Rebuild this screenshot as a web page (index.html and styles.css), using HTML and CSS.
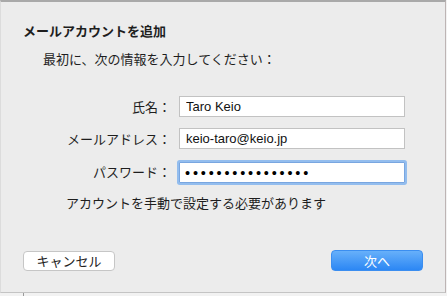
FILE: index.html
```html
<!DOCTYPE html>
<html lang="ja">
<head>
<meta charset="utf-8">
<link rel="stylesheet" href="styles.css">
</head>
<body>
<div class="dialog">
  <h1 class="title">メールアカウントを追加</h1>
  <p class="intro">最初に、次の情報を入力してください：</p>
  <div class="form">
    <label class="label" for="name">氏名：</label>
    <input class="field" id="name" type="text" value="Taro Keio">
    <label class="label" for="mail">メールアドレス：</label>
    <input class="field" id="mail" type="text" value="keio-taro@keio.jp">
    <label class="label" for="pass">パスワード：</label>
    <input class="field field-focus dots" id="pass" type="text" value="••••••••••••••••">
  </div>
  <p class="note">アカウントを手動で設定する必要があります</p>
  <div class="buttons">
    <button class="btn btn-cancel">キャンセル</button>
    <button class="btn btn-next">次へ</button>
  </div>
</div>
<div class="behind"></div>
</body>
</html>
```
FILE: styles.css
```css
html, body {
  margin: 0;
  padding: 0;
}
body {
  width: 447px;
  height: 296px;
  overflow: hidden;
  background: #f2f2f2;
  font-family: "Noto Sans CJK JP", "Liberation Sans", sans-serif;
  font-size: 13px;
  color: #1e1e1e;
}
.dialog {
  box-sizing: border-box;
  width: 446px;
  height: 293px;
  background: #ececec;
  border-top: 2px solid #a9a9a9;
  border-right: 1px solid #bdb4b4;
  border-bottom: 1px solid #c4c4c4;
  border-left: 1px solid #dcdcdc;
  padding: 21px 0 0 22px;
  display: flex;
  flex-direction: column;
}
.title {
  margin: 0;
  font-size: 13px;
  font-weight: bold;
  line-height: 16px;
  height: 16px;
}
.intro {
  margin: 12px 0 0 20px;
  line-height: 16px;
  height: 16px;
}
.form {
  margin-top: 29px;
  display: grid;
  grid-template-columns: 148px 226px;
  column-gap: 8px;
  row-gap: 11px;
  align-items: center;
}
.label {
  text-align: right;
  line-height: 16px;
}
.field {
  box-sizing: border-box;
  height: 21px;
  margin: 0;
  padding: 0 6px;
  border: 1px solid #c2c2c2;
  background: #fff;
  font-family: "Liberation Sans", sans-serif;
  font-size: 13px;
  color: #111;
  outline: none;
}
.field-focus {
  border-color: #79a6e0;
  box-shadow: 0 0 0 2px #93bdee;
  border-radius: 1px;
  margin-top: 2px;
}
.dots {
  font-size: 14.5px;
  letter-spacing: 2.8px;
  padding-left: 5px;
  color: #000;
}
.note {
  margin: 12px 0 0 43px;
  line-height: 16px;
  height: 16px;
}
.buttons {
  margin-top: 39px;
  display: flex;
  justify-content: space-between;
  align-items: center;
  padding-right: 22px;
}
.btn {
  font-family: "Noto Sans CJK JP", sans-serif;
  font-size: 13px;
  line-height: 16px;
  padding: 0;
  box-sizing: border-box;
  border-radius: 4px;
}
.btn-cancel {
  width: 92px;
  height: 20px;
  background: #fff;
  border: 1px solid #c6c6c6;
  color: #222;
}
.btn-next {
  width: 92px;
  height: 21px;
  border: 1px solid #3b8ef0;
  background: linear-gradient(#67b0fa, #2c87f4);
  color: #fff;
}
.behind {
  margin-left: 23px;
  width: 0;
  height: 3px;
  border-left: 1px solid #9a9a9a;
}
```
